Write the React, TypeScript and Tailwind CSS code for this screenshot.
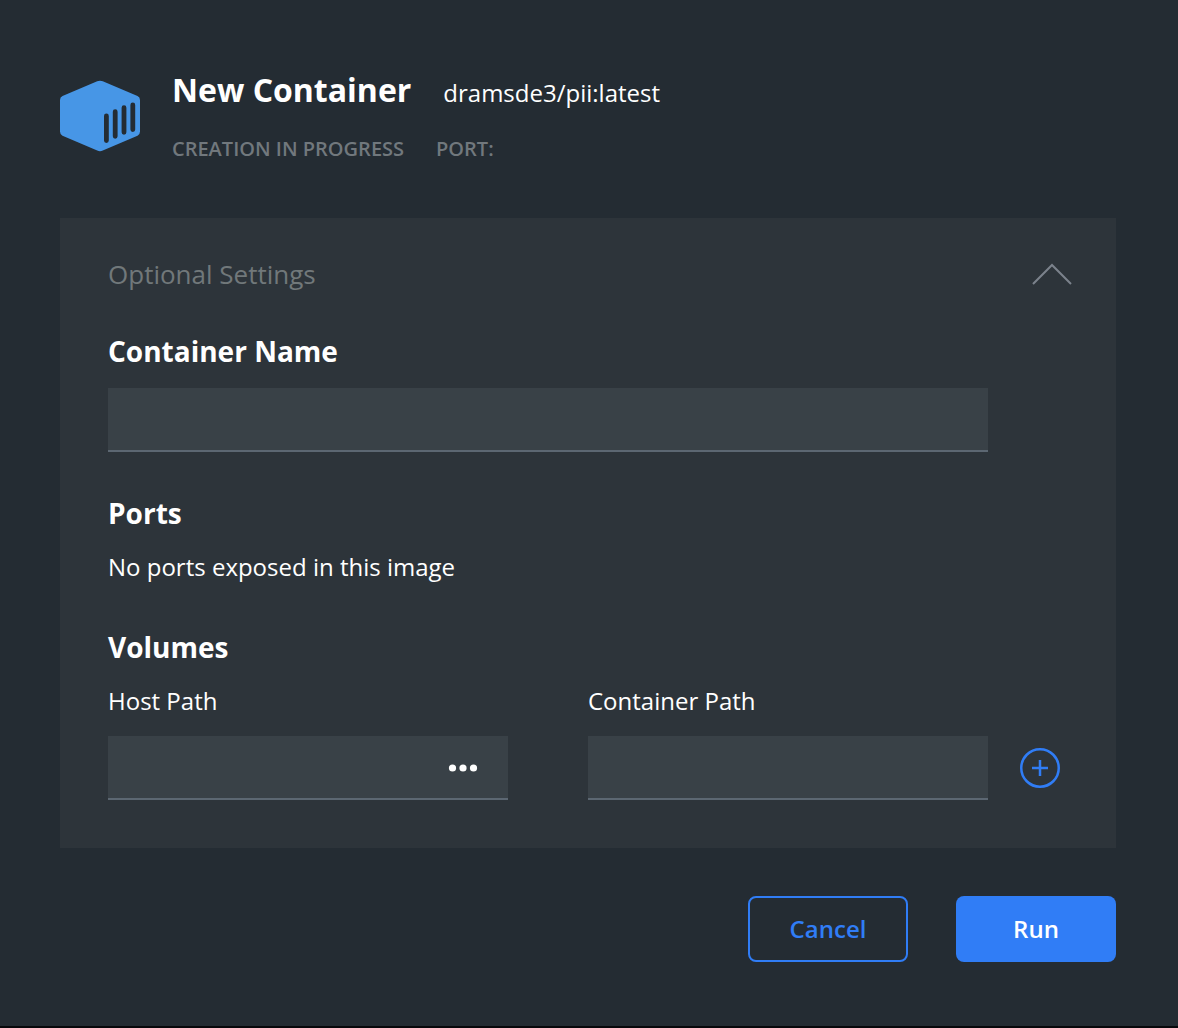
import React from "react";

const h2 = "text-[28px] leading-8 font-bold text-white";
const field = "h-16 border-b-2 border-[#5c6772] bg-[#394147]";

export default function App() {
  return (
    <main className="h-[1028px] w-[1178px] overflow-hidden border-b-2 border-[#07080b] bg-[#242c33] px-15 pt-[70px] font-['Open_Sans',sans-serif] text-white">
      <header className="flex h-[148px] gap-8">
        <svg className="mt-[10px] h-[72px] w-20 shrink-0" viewBox="0 0 80 72">
          <path d="M37.2 1.3Q40 0 42.8 1.3L77.5 16Q80 17.2 80 20V51.5Q80 54.5 77.5 55.7L42.8 70.5Q40 71.8 37.2 70.5L2.5 55.7Q0 54.5 0 51.5V20Q0 17.2 2.5 16Z" fill="#4796e6" />
          <path d="M46.4 36V60.6M55.2 31.7V56.3M64 27.7V52.3M72.8 25V49.6" stroke="#242c33" strokeWidth="4.8" strokeLinecap="round" />
        </svg>
        <div>
          <div className="flex items-baseline gap-8">
            <h1 className="text-[32px] leading-10 font-bold">New Container</h1>
            <span className="text-2xl leading-10">dramsde3/pii:latest</span>
          </div>
          <div className="mt-[22px] flex gap-8 text-xl leading-7 font-semibold text-[#71787d]">
            <span>CREATION IN PROGRESS</span>
            <span>PORT:</span>
          </div>
        </div>
      </header>
      <section className="h-[630px] w-[1056px] bg-[#2d343a] px-12 pt-10">
        <div className="flex h-8 justify-between text-[26px] leading-8 text-[#71787a]">
          <span>Optional Settings</span>
          <svg className="-mr-1 mt-1 h-6 w-10" viewBox="0 0 40 24" fill="none">
            <path d="M1 22L20 3L39 22" stroke="#7b828c" strokeWidth="2" />
          </svg>
        </div>
        <h2 className={`mt-[45px] ${h2}`}>Container Name</h2>
        <div className={`mt-[21px] w-[880px] ${field}`} />
        <h2 className={`mt-[45px] ${h2}`}>Ports</h2>
        <p className="mt-[22px] text-2xl leading-8">No ports exposed in this image</p>
        <h2 className={`mt-12 ${h2}`}>Volumes</h2>
        <div className="mt-[22px] flex">
          <div className="w-[400px]">
            <label className="block text-2xl leading-8">Host Path</label>
            <div className={`mt-[19px] flex items-center justify-end pr-[30px] ${field}`}>
              <svg className="mt-[2px] h-2 w-[30px]" viewBox="0 0 30 8" fill="white">
                <circle cx="4.5" cy="4" r="3.6" />
                <circle cx="15" cy="4" r="3.6" />
                <circle cx="25.5" cy="4" r="3.6" />
              </svg>
            </div>
          </div>
          <div className="ml-20 w-[400px]">
            <label className="block text-2xl leading-8">Container Path</label>
            <div className={`mt-[19px] ${field}`} />
          </div>
          <svg className="mt-[63px] ml-8 size-10 shrink-0" viewBox="0 0 40 40" fill="none" stroke="#307df6" strokeWidth="2.5">
            <circle cx="20" cy="20" r="18.75" />
            <path d="M12 20H28M20 12V28" />
          </svg>
        </div>
      </section>
      <footer className="mt-12 flex w-[1056px] justify-end gap-12 text-2xl font-semibold">
        <button className="h-[66px] w-40 rounded-lg border-2 border-[#307df6] text-[#307df6]">Cancel</button>
        <button className="h-[66px] w-40 rounded-lg bg-[#307df6]">Run</button>
      </footer>
    </main>
  );
}
